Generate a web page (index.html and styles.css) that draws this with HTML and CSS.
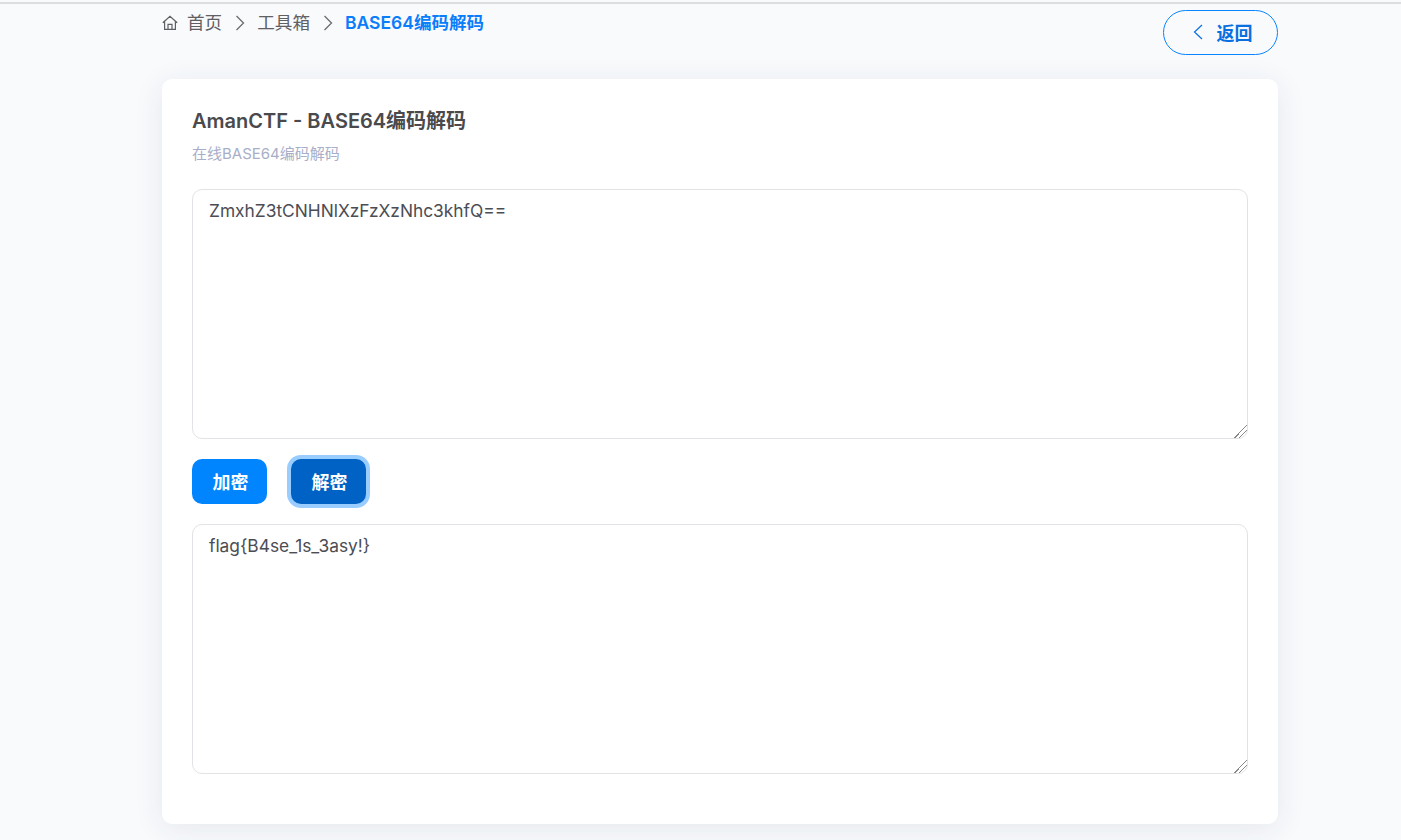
FILE: index.html
```html
<!DOCTYPE html>
<html lang="zh-CN">
<head>
<meta charset="utf-8">
<title>BASE64编码解码</title>
<link rel="stylesheet" href="styles.css">
</head>
<body>
<main class="page">
  <header class="topbar">
    <nav class="crumbs">
      <svg class="home" viewBox="0 0 16 16" width="16" height="16" fill="none" stroke="currentColor" stroke-width="1.200"><path d="M.8 7.800 8 1.200l7.200 6.600M2.600 6.400v8h10.800v-8M6 14.400V9.400h4v5"/></svg>
      <a class="crumb">首页</a>
      <svg class="sep" viewBox="0 0 10 16" width="10" height="16" fill="none" stroke="currentColor" stroke-width="1.300"><path d="M1.500 1 8.500 8l-7 7"/></svg>
      <a class="crumb">工具箱</a>
      <svg class="sep" viewBox="0 0 10 16" width="10" height="16" fill="none" stroke="currentColor" stroke-width="1.300"><path d="M1.500 1 8.500 8l-7 7"/></svg>
      <span class="crumb current">BASE64编码解码</span>
    </nav>
    <button class="back" type="button">
      <svg viewBox="0 0 10 16" width="10" height="16" fill="none" stroke="currentColor" stroke-width="1.200"><path d="M9 1 1.500 8 9 15"/></svg>
      <span>返回</span>
    </button>
  </header>
  <section class="card">
    <h1 class="title">AmanCTF - BASE64编码解码</h1>
    <p class="sub">在线BASE64编码解码</p>
    <textarea class="box" spellcheck="false">ZmxhZ3tCNHNlXzFzXzNhc3khfQ==</textarea>
    <div class="actions">
      <button class="btn" type="button">加密</button>
      <button class="btn active" type="button">解密</button>
    </div>
    <textarea class="box" spellcheck="false">flag{B4se_1s_3asy!}</textarea>
  </section>
</main>
</body>
</html>
```
FILE: styles.css
```css
* { box-sizing: border-box; }
html { height: 100%; overflow: hidden; background: #f8fafc; }
body {
  margin: 2px 0 0;
  height: 838px;
  background: #f8fafc;
  border-top: 2px solid #dcdde0;
  font-family: Inter, "Noto Sans CJK SC", sans-serif;
  color: #4b4b4f;
}
.page { width: 1116px; margin: 0 0 0 162px; }
.topbar { display: flex; justify-content: space-between; align-items: flex-start; height: 75px; }
.crumbs { display: flex; align-items: center; height: 24px; margin-top: 7px; font-size: 17.6px; line-height: 24px; color: #5f6064; }
.home { margin-right: 9px; }
.sep { margin: 0 12.500px; color: #6b6c70; }
.crumb { white-space: nowrap; }
.current { color: #0a7dfa; font-weight: 600; font-size: 17.500px; }
.back {
  display: flex; align-items: center; justify-content: center; gap: 14px;
  width: 115px; height: 45px; margin-top: 6px; padding: 0 0 2px 4px;
  background: transparent; border: 1px solid #0a84ff; border-radius: 23px;
  color: #0a6fe0; font: 700 18px Inter, "Noto Sans CJK SC", sans-serif;
}
.card {
  background: #fff; border-radius: 10px; padding: 29px 30px 50px;
  height: 745px;
  box-shadow: 0 5px 30px rgba(40, 50, 90, 0.09);
}
.title { margin: 0; font-size: 20px; line-height: 26px; font-weight: 600; color: #4a4a4d; }
.sub { margin: 10px 0 0; font-size: 15px; line-height: 20px; color: #a9aec8; }
.box {
  display: block; width: 100%; height: 250px; margin-top: 25px;
  padding: 9px 16px; border: 1px solid #e2e3e6; border-radius: 10px;
  font: 400 17.330px/24px Inter, "Noto Sans CJK SC", sans-serif; color: #4b4d55;
  background: #fff; outline: none;
}
.box::-webkit-resizer {
  background: linear-gradient(135deg, transparent 55%, #888 55% 60%, transparent 60% 71%, #888 71% 76%, transparent 76%);
}
.actions { display: flex; gap: 24px; margin: 20px 0; }
.actions + .box { margin-top: 0; }
.btn {
  width: 75px; height: 45px; padding: 0 0 2px 2px; border: 0; border-radius: 10px;
  background: #0085ff; color: #fff; font: 700 18px Inter, "Noto Sans CJK SC", sans-serif;
}
.active { background: #0062c4; box-shadow: 0 0 0 4px #9acdff; }
```
